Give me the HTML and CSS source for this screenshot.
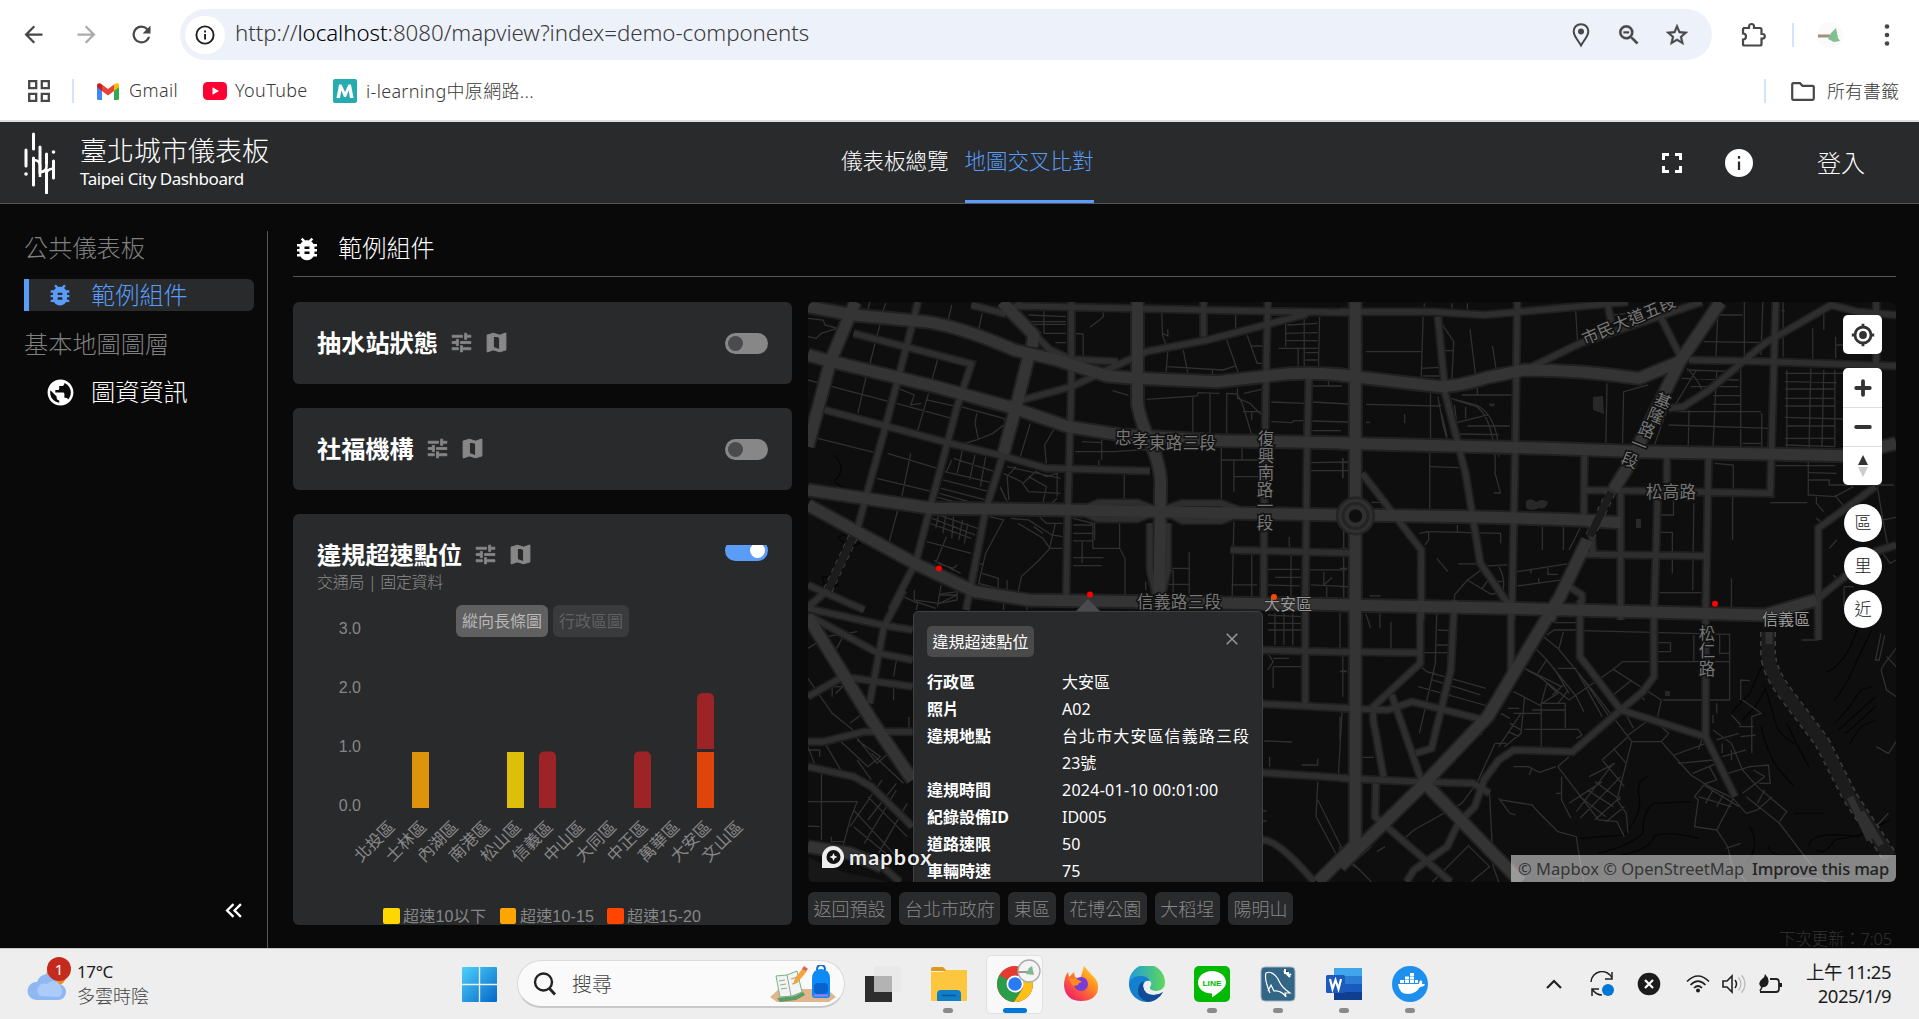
FILE: index.html
```html
<!DOCTYPE html>
<html lang="zh-Hant">
<head>
<meta charset="utf-8">
<title>臺北城市儀表板</title>
<link rel="stylesheet" href="styles.css">
</head>
<body>
<svg class="sprite" aria-hidden="true">
  <symbol id="bug" viewBox="0 0 24 24"><path d="M20 8h-2.81c-.45-.78-1.07-1.45-1.82-1.96L17 4.41 15.59 3l-2.17 2.17C12.96 5.06 12.49 5 12 5s-.96.06-1.41.17L8.41 3 7 4.41l1.62 1.63C7.88 6.55 7.26 7.22 6.81 8H4v2h2.09c-.05.33-.09.66-.09 1v1H4v2h2v1c0 .34.04.67.09 1H4v2h2.81c1.04 1.79 2.97 3 5.19 3s4.15-1.21 5.19-3H20v-2h-2.09c.05-.33.09-.66.09-1v-1h2v-2h-2v-1c0-.34-.04-.67-.09-1H20V8zm-6 8h-4v-2h4v2zm0-4h-4v-2h4v2z"/></symbol>
  <symbol id="globe" viewBox="0 0 24 24"><path d="M12 2C6.48 2 2 6.48 2 12s4.48 10 10 10 10-4.48 10-10S17.52 2 12 2zm-1 17.93c-3.95-.49-7-3.85-7-7.93 0-.62.08-1.21.21-1.79L9 15v1c0 1.1.9 2 2 2v1.93zm6.9-2.54c-.26-.81-1-1.39-1.9-1.39h-1v-3c0-.55-.45-1-1-1H8v-2h2c.55 0 1-.45 1-1V7h2c1.1 0 2-.9 2-2v-.41c2.93 1.19 5 4.06 5 7.41 0 2.08-.8 3.97-2.1 5.39z"/></symbol>
  <symbol id="tune" viewBox="0 0 24 24"><path d="M3 17v2h6v-2H3zM3 5v2h10V5H3zm10 16v-2h8v-2h-8v-2h-2v6h2zM7 9v2H3v2h4v2h2V9H7zm14 4v-2H11v2h10zm-6-4h2V7h4V5h-4V3h-2v6z" stroke="currentColor" stroke-width=".8" stroke-linejoin="round"/></symbol>
  <symbol id="map" viewBox="0 0 24 24"><path d="M20.5 3l-.16.03L15 5.1 9 3 3.36 4.9c-.21.07-.36.25-.36.48V20.5c0 .28.22.5.5.5l.16-.03L9 18.9l6 2.1 5.64-1.9c.21-.07.36-.25.36-.48V3.5c0-.28-.22-.5-.5-.5zM15 19l-6-2.11V5l6 2.11V19z" stroke="currentColor" stroke-width="1" stroke-linejoin="round"/></symbol>
  <symbol id="back" viewBox="0 0 24 24"><path d="M20 11H7.83l5.59-5.59L12 4l-8 8 8 8 1.41-1.41L7.83 13H20v-2z"/></symbol>
</svg>

<div class="browser">
  <div class="toolbar">
    <svg class="nav-back"><use href="#back"/></svg>
    <svg class="nav-fwd"><use href="#back"/></svg>
    <svg class="nav-reload" viewBox="0 0 24 24"><path d="M17.65 6.35A7.958 7.958 0 0 0 12 4a8 8 0 1 0 7.73 10h-2.08A6 6 0 1 1 12 6c1.66 0 3.14.69 4.22 1.78L13 11h7V4l-2.35 2.35z"/></svg>
    <div class="omnibox">
      <span class="site-info"><svg viewBox="0 0 20 20" width="20" height="20"><circle cx="10" cy="10" r="8.6" fill="none" stroke="#1f1f1f" stroke-width="1.9"/><path d="M9.1 9h1.9v5.4H9.1zM9.1 5.6h1.9v2H9.1z"/></svg></span>
      <span class="url">http://<b>localhost</b>:8080/mapview?index=demo-components</span>
      <svg class="ob-icon" viewBox="0 0 24 26"><path d="M12 2.2c-4.300 0-7.300 3.200-7.300 7.200 0 4.600 4 8.300 7.300 14.100 3.300-5.800 7.300-9.500 7.300-14.100 0-4-3-7.200-7.300-7.200z" fill="none" stroke="#474747" stroke-width="2"/><circle cx="12" cy="9.500" r="3"/></svg>
      <svg class="ob-icon" viewBox="0 0 24 24"><path d="M15.500 14h-.79l-.28-.27A6.471 6.471 0 0 0 16 9.500 6.500 6.500 0 1 0 9.500 16c1.610 0 3.090-.59 4.230-1.570l.27.28v.79l5 4.990L20.490 19l-4.990-5zm-6 0C7.010 14 5 11.990 5 9.500S7.010 5 9.500 5 14 7.010 14 9.500 11.990 14 9.500 14zM7 8.700h5v1.600H7z" stroke="currentColor" stroke-width=".4"/></svg>
      <svg class="ob-icon" viewBox="0 0 24 24"><path d="M22 9.240l-7.190-.62L12 2 9.190 8.630 2 9.240l5.460 4.730L5.820 21 12 17.270 18.180 21l-1.630-7.030L22 9.240zM12 15.400l-3.760 2.270 1-4.280-3.320-2.880 4.380-.38L12 6.100l1.710 4.040 4.380.38-3.320 2.880 1 4.280L12 15.400z" stroke="currentColor" stroke-width=".4"/></svg>
    </div>
    <svg class="puzzle" viewBox="0 0 28 28"><path d="M4 7h6V5.500a2.500 2.500 0 0 1 5 0V7h6q1.500 0 1.500 1.500V13h1a2.300 2.300 0 0 1 0 4.600h-1V23q0 1.500-1.500 1.500H5.500Q4 24.500 4 23v-4.500a3 3 0 0 0 0-6V8.500Q4 7 5.500 7" fill="none" stroke="#474747" stroke-width="2.200"/></svg>
    <i class="sep sep-ext"></i>
    <svg class="profile" viewBox="0 0 28 28"><circle cx="14" cy="14" r="13" fill="#fafafa"/><path d="M2 13.500h12v2.500H2z" fill="#b58a6a"/><path d="M2 15h12v1.500H2z" fill="#8a9a88"/><path d="M12 18l3-6 5-5 2 10 2 3-6 1z" fill="#7fbf93"/></svg>
    <svg class="dots" viewBox="0 0 6 24"><circle cx="3" cy="3.500" r="2.300"/><circle cx="3" cy="12" r="2.300"/><circle cx="3" cy="20.500" r="2.300"/></svg>
  </div>
  <div class="bookmarks">
    <svg class="apps" viewBox="0 0 22 22"><path d="M1.200 1.200h7v7h-7zM13.800 1.200h7v7h-7zM1.200 13.800h7v7h-7zM13.800 13.800h7v7h-7z" fill="none" stroke="#474747" stroke-width="2.300"/></svg>
    <i class="sep sep-apps"></i>
    <svg class="bm-gmail" viewBox="0 0 22 17"><path d="M0 2v13.500Q0 17 1.500 17H5V7z" fill="#4285f4"/><path d="M22 2v13.500q0 1.500-1.500 1.500H17V7z" fill="#34a853"/><path d="M17 1.500l2-1.200Q22-.5 22 2.500V4l-5 4z" fill="#fbbc04"/><path d="M5 8V1.500l6 4.500 6-4.500V8l-6 4.500z" fill="#ea4335"/><path d="M5 8L0 4V2.500Q0-.5 3 .3l2 1.200z" fill="#c5221f"/></svg>
    <span class="t-gmail">Gmail</span>
    <svg class="bm-yt" viewBox="0 0 24 18"><rect width="24" height="18" rx="4.500" fill="#f03"/><path d="M9.500 5.300v7.400L16 9z" fill="#fff"/></svg>
    <span class="t-yt">YouTube</span>
    <svg class="bm-m" viewBox="0 0 24 24"><rect width="24" height="24" rx="2" fill="#26abb0"/><path d="M3.500 19L6 5.500h2.500L12 13l3.500-7.500H18L20.500 19H17l-1.300-7.500L13 18h-2l-2.700-6.500L7 19z" fill="#fff"/></svg>
    <span class="t-learn">i-learning中原網路...</span>
    <i class="sep sep-all"></i>
    <svg class="folder" viewBox="0 0 24 19"><path d="M1.200 2.500q0-1.300 1.300-1.300H9l2.500 2.600h10q1.300 0 1.300 1.300v11.400q0 1.300-1.300 1.300h-19q-1.300 0-1.300-1.300z" fill="none" stroke="#474747" stroke-width="2.200"/></svg>
    <span>所有書籤</span>
  </div>
</div>

<header class="app-header">
  <svg class="logo" viewBox="0 0 32 62"><path d="M2 18v16M9.500 2v15M9.500 26v27M16 15v26M22.500 38v23M22.500 22v9M29.500 29v17" fill="none" stroke="#fff" stroke-width="3" stroke-linecap="round"/><path d="M9.500 28q6 0 6.500 5v12M16 40q6 0 6.500-5v-9M22.500 42q0-5 7-5.500" fill="none" stroke="#fff" stroke-width="2.600"/><circle cx="2" cy="42" r="1.800" fill="#fff"/><circle cx="29.500" cy="20" r="1.800" fill="#fff"/></svg>
  <div class="brand"><h1>臺北城市儀表板</h1><h2>Taipei City Dashboard</h2></div>
  <nav><a>儀表板總覽</a><a class="on">地圖交叉比對</a></nav>
  <svg class="h-full" viewBox="0 0 20 20"><path d="M1.500 7V1.500H7M13 1.500h5.500V7M18.500 13v5.500H13M7 18.500H1.500V13" fill="none" stroke="#fff" stroke-width="3"/></svg>
  <svg class="h-info" viewBox="2 2 20 20"><path d="M12 2a10 10 0 1 0 0 20 10 10 0 0 0 0-20zm.8 15h-1.600v-6h1.600v6zm0-8h-1.600V7h1.600v2z"/></svg>
  <span class="login">登入</span>
</header>

<div class="app">
  <aside>
    <div class="side-list">
      <h3>公共儀表板</h3>
      <div class="item active"><svg><use href="#bug"/></svg>範例組件</div>
      <h3>基本地圖圖層</h3>
      <div class="item"><svg><use href="#globe"/></svg>圖資資訊</div>
    </div>
    <svg class="collapse" viewBox="0 0 16 14"><path d="M8 1L2 7l6 6M15 1L9 7l6 6" fill="none" stroke="#fff" stroke-width="2.200"/></svg>
  </aside>
  <main>
    <div class="title"><svg><use href="#bug"/></svg>範例組件</div>
    <div class="content">
      <div class="cards">
        <section class="card"><div class="card-head"><h4>抽水站狀態</h4><svg><use href="#tune"/></svg><svg><use href="#map"/></svg><span class="toggle"></span></div></section>
        <section class="card"><div class="card-head"><h4>社福機構</h4><svg><use href="#tune"/></svg><svg><use href="#map"/></svg><span class="toggle"></span></div></section>
        <section class="card tall">
          <div class="card-head"><h4>違規超速點位</h4><svg><use href="#tune"/></svg><svg><use href="#map"/></svg><span class="toggle-clip"><span class="toggle on"></span></span></div>
          <p>交通局 | 固定資料</p>
          <div class="tabs"><span class="on">縱向長條圖</span><span>行政區圖</span></div>
          <svg class="chart" viewBox="0 0 499 288">
            <g class="ylab"><text x="68" y="-3">3.0</text><text x="68" y="56">2.0</text><text x="68" y="115">1.0</text><text x="68" y="174">0.0</text></g>
            <path d="M119 115h17v56h-17z" fill="#dd930c"/>
            <path d="M214 115h17v56h-17z" fill="#ddbe0a"/>
            <path d="M246 171v-51q0-5.500 5.500-5.500h6q5.500 0 5.500 5.500v51z" fill="#9c2426"/>
            <path d="M341 171v-51q0-5.500 5.500-5.500h6q5.500 0 5.500 5.500v51z" fill="#9c2426"/>
            <path d="M404 115h17v56h-17z" fill="#df440b"/>
            <path d="M404 112v-50q0-6 5.500-6h6q5.500 0 5.500 6v50z" fill="#9c2426"/>
            <g class="xlab">
              <text transform="translate(103 191) rotate(-45)">北投區</text><text transform="translate(134.600 191) rotate(-45)">士林區</text><text transform="translate(166.200 191) rotate(-45)">內湖區</text><text transform="translate(197.800 191) rotate(-45)">南港區</text><text transform="translate(229.400 191) rotate(-45)">松山區</text><text transform="translate(261 191) rotate(-45)">信義區</text><text transform="translate(292.700 191) rotate(-45)">中山區</text><text transform="translate(324.300 191) rotate(-45)">大同區</text><text transform="translate(356 191) rotate(-45)">中正區</text><text transform="translate(387.600 191) rotate(-45)">萬華區</text><text transform="translate(419.200 191) rotate(-45)">大安區</text><text transform="translate(450.800 191) rotate(-45)">文山區</text>
            </g>
            <g class="legend"><rect x="90" y="271" width="17" height="16" rx="2" fill="#ffd700"/><text x="110" y="285" textLength="83">超速10以下</text><rect x="207" y="271" width="16" height="16" rx="2" fill="#ffa500"/><text x="227" y="285" textLength="74">超速10-15</text><rect x="314" y="271" width="17" height="16" rx="2" fill="#ff4500"/><text x="334" y="285" textLength="74">超速15-20</text></g>
          </svg>
        </section>
      </div>
      <div class="map-col">
        <div class="map">
          <svg class="tiles" viewBox="0 0 1088 580">
            <defs>
              <g id="mid-roads">
                <g transform="translate(-8 -12) scale(.3571 .3333)">
                  <path d="M570 490L520 660L480 880L465 960M330 36L320 80L240 408L190 600L160 720M150 130L480 222L440 350L365 650L325 815L255 960M70 360L240 408L420 460L570 498L690 535L980 543M760 36V290L750 660L745 930M480 45L570 70L620 40M610 48L1130 60L1568 68M1130 36V140M1310 36L1305 250L1300 640L1298 960M570 345L760 290L900 220L970 185L1140 150L1420 72M655 130L700 180L760 208L890 215M1425 265L1420 460L1415 960M1205 780L1568 790M22 885L180 960M22 950L80 900"/>
                  <path d="M800 655L835 638H945L1000 662L945 687H835L780 662M1010 662L1070 640H1180L1240 665L1180 692H1070L1020 662M980 700V840L1000 930M1030 700V840L1010 930"/>
                </g>
                <g transform="translate(532 -12) scale(.3693 .3333)">
                  <path d="M0 65H250L390 75L720 42L780 36M265 80L285 310L340 550L380 820L460 950M480 36L475 450L465 990M60 550L220 780V990M520 230L650 160L980 36M870 85L920 195M725 45L735 100M945 210L1100 213L1506 228M890 355L930 350L1000 300L1150 160L1330 45L1400 65L1506 75M1180 36L1165 610L665 600M1452 36V220M885 490V580M662 490L660 690M998 495L990 990M860 620L850 990M760 600V990M680 700L685 790M665 793L990 798M1450 590L1295 715V990M620 890L655 915V960M1290 930L1450 785L1506 765"/>
                </g>
                <g transform="translate(-8 288) scale(.3571 .3333)">
                  <path d="M22 55L230 105L315 120M290 0L235 110L195 340M22 75L220 190L315 210M22 320L120 260L315 290M22 455H65L180 425H315M22 530L150 560L200 590L315 710M22 55L75 0M230 830L280 876M1296 750Q1340 750 1440 876M1296 180L1535 187M1296 342L1535 355M1296 548L1535 565M1415 0V340"/>
                </g>
                <g transform="translate(532 298) scale(.3693 .3333)">
                  <path d="M0 535L210 545L360 550L405 580M217 0V190L90 320V360L118 530M0 155L217 158M0 325L130 330L195 305L390 360M140 285L220 540M310 0L300 210L248 445L205 460M463 0V220M650 0V170L760 330L990 410L1070 590M850 0V230L820 275L760 330L630 455L470 450L430 480L390 540L365 620L320 670L290 740L200 810L180 846M990 0V410M97 550L95 650L300 846M1295 0V120"/>
                </g>
              </g>
              <g id="main-roads">
                <g transform="translate(-8 -12) scale(.3571 .3333)">
                  <path d="M22 195L90 215L380 290L600 355L750 410L900 435L1180 452L1568 460M22 600L180 625L370 655L750 660L1000 665L1510 675M22 645L330 825L490 905L640 930L1568 945M155 36L85 215L22 470M565 36L655 135L650 170M640 200L610 330L570 490M945 36V340Q950 380 970 430Q1010 520 1010 580L1005 940M1555 36V625M1555 730V990"/>
                  <path d="M22 50L150 75L350 95Q450 110 600 180L720 210L860 258L940 265L1170 275L1310 258Q1430 240 1568 262"/>
                </g>
                <g transform="translate(532 -12) scale(.3693 .3333)">
                  <path d="M0 255L270 290Q320 290 400 262L500 240Q650 240 810 265L920 215L1030 36M0 460L560 475L820 485L1370 497L1506 460M90 676L350 680L650 690L760 698M920 215L780 530L740 600M670 750L565 990M0 945L460 955L1150 975L1290 930"/>
                </g>
                <g transform="translate(-8 288) scale(.3571 .3333)"><path d="M22 80L200 390L315 570M22 770L140 790L230 830M1450 876L1568 750M1555 0V760"/></g>
                <g transform="translate(532 298) scale(.3693 .3333)"><path d="M0 800L220 560L400 350L470 220L590 0M230 550L490 846"/></g>
              </g>
            </defs>
            <rect width="1088" height="580" fill="#0e0e0e"/>
            <g class="contour" transform="translate(532 298) scale(.3693 .3333)">
              <path d="M1320 215Q1370 190 1400 90M1340 300Q1380 240 1400 180L1440 90M1340 370L1380 320L1410 270L1440 260M1350 390L1400 340L1450 290M1370 400L1450 320M1380 430L1410 380L1450 360M1150 260Q1170 330 1180 370T1230 430M1210 370L1240 440L1270 500M1140 380Q1160 470 1190 510L1230 560M650 715L770 705Q820 640 810 590Q800 540 835 530M700 760Q780 740 820 700Q820 630 850 610L950 605M760 765Q840 750 850 710Q880 690 970 715M1100 790Q1140 740 1110 680M1160 740Q1170 780 1250 760M1270 740Q1270 690 1400 710L1490 660M1290 750Q1310 770 1340 720L1430 700M1230 640H1310"/>
              <path d="M1060 340Q1090 300 1110 280L1150 180M1090 360Q1130 320 1150 270"/>
            </g>
            <path class="contour" d="M26 153q14 14 0 26M26 180q9 4 8 9M30 235l12-4 10 10-12 5zM14 275l12 0 4 8-12 4z"/>
            <path d="M1 555Q28 570 50 573L80 580H0z" fill="#171717"/>
            <g class="minor">
              <g transform="translate(-8 -12) scale(.3571 .3333)">
                <path d="M22 85L65 90L70 105L105 115L60 130L45 145L22 140M195 36L190 60M240 40L232 65M425 45L415 90M510 70L500 120M225 100L215 140M210 160L195 225M385 210L368 275M90 290L250 335M185 260L162 370M22 270L50 278M275 295L320 315L310 345L340 340M270 340L425 385M360 310L330 420M355 330L440 350M450 350L570 385L577 400L540 430L495 450L460 460M495 370L490 400L500 450M645 400L617 500M710 420L685 465L690 520M50 445L210 488M245 490L385 535M310 490L285 620M215 565L370 605M275 655L250 755M630 95H745M640 75L745 80M683 60V130M655 103H745M683 130H745M715 158H745M770 130L793 132V200M848 65L850 80L812 112M1013 70L1015 135L1030 180L1025 245M1030 118V138L1015 130M1073 180L1087 255M1028 230L1185 240L1220 228M1195 150L1228 250M1155 240V258M1252 135L1280 220H1295M1262 168H1300M1220 75V115M1340 175H1450M1455 80L1452 230M1360 100V170M1412 85V230M1395 175V230M1365 105L1450 100M1360 130L1450 128M1360 152H1450M1415 188H1450M1415 210H1450M875 302L920 316M970 328L1112 318L1115 308L1175 310M1100 320V430M1148 310V430M1195 435V310L1225 312L1240 345L1265 435M1225 295V325L1260 340L1290 372M1240 365H1290M1265 365V390M1243 310L1293 298M1320 336L1415 340M1435 336L1535 342M1320 395L1378 398L1382 392H1415M1435 393L1535 396M1435 422H1515M1435 288H1518M1480 270V288M770 485H875L980 478M845 450V510M790 455L845 458M837 510V530M908 550V630M1180 470V635M1238 470V510M1180 510H1285M1215 510V605M1215 560H1285M1430 518L1535 516M1430 542H1535M1520 505V565"/>
                <path d="M430 505L545 545M425 510L410 545M455 480L440 550M490 495L475 570M520 500L505 590M405 545L545 580M400 570L530 605M395 595L520 630M390 610L490 640M385 622L450 640M580 530L730 565M570 550L620 575L640 605L730 610M605 530L580 560L585 630M625 580L660 545L690 560L720 550V620M560 590L580 635M640 560L690 590L680 640M720 625L705 640M375 670L510 720M370 685L490 735M365 700L480 745M390 665L380 715M410 665L400 730M430 680L425 745M455 690L445 750M470 700L460 760M355 755L480 790M410 740L380 820M375 810L450 850M440 825L425 840M385 820L430 835M530 680L570 690L520 790L500 880M590 685L640 690L705 735L735 740M610 700L680 745L700 775L670 810L620 860L610 910M670 680L690 700H735M700 775H735M655 710L680 730M715 700L700 770M500 820L515 825M510 850L555 865V895L500 880M580 870V900M765 685L820 700V775H895L910 805V920M765 705H820M765 730H820M765 753H820M790 755V820M765 803H850M765 827H845M895 695V775M825 690V750M1215 695L1210 930M1265 795V930M1090 785V930M1030 835H1090M1045 840V910M1025 883H1090M968 875V900M1310 838H1400M1330 862H1405M1310 885L1400 888M1370 740V775M1375 790V930M1425 840H1530M1430 885L1535 890M1467 845V885L1490 862M1475 890V930M1522 700V930M1210 885H1280M395 885L385 950M395 912L440 905V930L390 940M290 920L330 940M325 935L380 955M570 935V960M635 940V960"/>
              </g>
              <g transform="translate(532 -12) scale(.3693 .3333)">
                <path d="M228 40V50M303 40V55M345 40V60M70 185H220M225 80L220 265M220 235L270 232M225 258H270M275 80L278 105L308 155L303 265L310 270M285 182H305M352 118L367 255M413 168L423 240M638 60L643 150M780 70L740 75M70 343L265 348L275 345M245 310V450M70 397H82M175 372V400M330 315H465M372 280V315M300 325L370 345Q430 380 430 500M310 330L370 350Q410 380 420 500M315 398L400 375M345 408H460M320 432L430 434M265 320L280 410L290 448M275 370L290 440M420 500V550L435 610M310 345L315 390M340 350V385M723 280L720 460M835 285L768 305L765 460M1020 75H1090M1023 70L1018 200M1095 36V200M985 155L1160 158M1145 36L1140 195M1200 36V200M1195 62H1205M1280 115V205M1310 70V120M1342 140V205M1345 165H1362M940 240L1080 245M925 265L1080 270M950 290H1080M965 240L910 340M940 235Q970 270 980 300M1020 245L1010 470M1085 235V470M890 405L1165 415M910 365H1140M945 360L943 470M1142 370V470M1090 460H1140M885 360L850 470M1010 317H1085M1010 343H1085M1205 250H1362M1205 275L1345 278M1205 297H1340M1205 325H1340M1205 348H1340M1205 382L1362 387M1210 408H1340M1205 445H1340M1205 465L1340 470M1210 240V470M1275 235L1270 475M1340 240V470M1310 240L1305 470M243 485V660M245 530L322 533M8 505V565M0 518H22M85 637H125M215 730L240 725V750L230 765M243 725L435 730V760M318 705V725M548 710V780M605 712V780M650 715L620 780M0 775H20M10 710V930M0 835H20M0 890H20M80 918H110M262 805L292 845M320 822H370M395 828L453 825M430 830Q450 870 440 910L408 912L345 870L395 830M345 870L310 915V940M385 895L400 872L440 875M480 845L615 822M480 888L600 870M517 840V850M563 830V853H590M538 865V880M903 630V675H865M958 640L955 900M860 727H900V850M865 908H980M1063 620V750M1060 865V960M1165 638H1265M1015 520L1065 525V600M1175 527H1340M1268 515V615L1340 620L1390 590M1270 570H1325V585H1500M1270 548L1345 550M1290 620V640L1310 665M1340 615L1365 650M1455 590L1470 690L1506 682M1470 690L1482 760M1290 685L1305 700M1325 775L1345 750M1335 855L1350 870M1365 890H1390M1365 890V950M1470 790L1490 820L1506 810"/>
              </g>
              <g transform="translate(-8 288) scale(.3571 .3333)">
                <path d="M22 175L75 140L160 125M75 145L100 180L125 130M22 265L90 370L160 430M200 350L140 400M90 290V320M90 290L120 290L100 310M270 210L262 260M262 290V330M305 380V415M22 480H55V500M22 470L40 520M60 530V750M70 460L125 560M110 450L190 530L225 500L160 450M150 430L215 520L270 470M200 490L290 580M160 510L200 570M230 570L140 710M270 600L180 760M300 640L220 790M150 660L270 800M190 620L300 740M150 710L240 790M22 635H160L140 690L120 770M22 708L55 710M88 740V755H125M270 580L190 690M320 0V30L390 40L440 15M390 15H440M330 40L325 60M1310 75L1405 80M1310 100H1405M1310 120H1405M1330 70V165M1355 70V165M1380 70V165M1310 190L1325 215L1310 240M1325 205H1370M1325 230H1405M1325 230V295M1300 453L1378 456M1315 500V530M1405 525H1450V505M1450 575L1445 680L1500 790M1450 630L1520 780M1518 365L1508 550M1520 190V320M1515 243H1530M1550 790L1540 820L1568 840M1296 663H1306M1296 693H1306"/>
              </g>
              <g transform="translate(532 298) scale(.3693 .3333)">
                <path d="M0 40V150M70 42L83 85M108 40V85M138 65V145M0 215H18M60 472H92M0 350V420M262 40L258 190L215 400M265 90L298 92M262 135H298M220 158H298M220 200L235 215L395 265M250 240L380 285M212 260L400 318L410 325M275 290L300 285M580 68H640M560 105L580 90H645M605 95L593 145M655 92L1055 103V300L875 300M860 128H895V155H860M958 105V185M1028 105V160H1055M765 185H1055M765 185L740 208L870 300L860 350M790 240L740 285M620 300L740 208M825 300L815 290M545 105L590 145L680 265L780 410L790 425L775 490L750 600L775 640L780 700M525 140L560 180L640 290L660 335M505 210L540 230L620 300M500 205L600 260M590 205H640M580 205L620 280M545 310H610V385M545 315V440M520 330H610M470 340H545M455 325H485M500 290L490 400L445 440M470 275L540 315L590 280L560 250L545 310M615 275L590 310M605 255L575 285M435 340L460 355M450 430L420 430L370 550L330 610L200 690L175 715M490 340L430 440M460 370L490 390M455 395L485 410M500 388H645L655 405L640 415M560 180L535 220M525 80L500 130L485 190M640 210L710 350M660 240L735 360M775 345L795 385M830 365L780 405M790 425H870L890 400L870 380M870 425L950 525L1000 560L1065 595L1020 690L960 680L970 600L960 590L985 555M990 430L905 465M980 420L970 450M1010 480L915 490M1020 490L955 520M1000 500L1020 540L990 550M1090 300L1140 340L1115 350V460M1080 380H1120M1060 345L1085 375M1085 410L1125 405M1010 345V370M1020 310V340M1010 390L1060 430L1090 510L1130 560L1210 635L1190 665M1020 420L1080 400M1035 470L1100 450M1050 520L1110 500L1160 495L1165 550H1135M1120 510L1150 530M1090 580L1150 530M1100 590L1190 670L1300 830M1060 590L1100 640L1130 630L1170 590M1130 610L1150 570M1045 745L1085 730M1020 690L1050 740L1060 790L1100 846M985 555L1080 620M970 590L1060 620M1010 570L990 610M1040 580L1020 620M1060 450V480M1035 430V460M590 500L620 470M590 500L700 660L750 665L770 710M470 500L510 500L540 517L585 500M520 505L512 525M600 530V600L625 655M585 580H600M620 610L710 545M640 635L740 490M650 655L760 530M690 660L760 590M720 665L770 620M710 480L780 410M675 530L745 490M690 545L760 600M670 570L740 620M650 590L720 650M710 480L770 560M740 445L775 490M405 580L415 800L430 846M430 595L460 640L475 645M435 600L520 615L540 640L590 695L640 710L645 750L660 846M375 400L385 405M250 846L350 735M350 740L405 800L355 846M85 740L35 790L85 846M100 755L122 740M0 740V760M0 760L12 780M1085 300L1085 240L1110 242M1220 835L1290 835L1320 846M1250 120H1295M1465 100L1450 180H1460L1475 105M1480 170L1506 200M1465 210L1480 270L1506 290M1506 145L1475 190L1465 210M1452 440L1485 460L1506 425M1455 675L1485 640M570 828H600"/>
              </g>
            </g>
            <use href="#mid-roads" class="case-mid"/><use href="#main-roads" class="case-main"/>
            <use href="#mid-roads" class="fill-mid"/><use href="#main-roads" class="fill-main"/>
            <g fill="none"><circle cx="547.500" cy="214" r="6" fill="#0e0e0e"/><circle cx="547.500" cy="214" r="13" stroke="#242424" stroke-width="13"/><circle cx="547.500" cy="214" r="15.500" stroke="#303030" stroke-width="3"/><circle cx="547.500" cy="214" r="9" stroke="#303030" stroke-width="4"/></g>
            <path class="tunnel-edge" d="M960 330V350Q960 368 978 392L1014 440L1042 495L1082 555"/><path class="tunnel" d="M960 330V350Q960 368 978 392L1014 440L1042 495L1082 555"/>
            <path class="tunnel-end" d="M961 330V342M1042 495L1062 538M1053 510L1073 543"/>
            <path class="tunnel-edge thin" d="M803 190L782 234M45 235L20 288"/><path class="tunnel thin" d="M803 190L782 234M45 235L20 288"/>
            <path d="M785 95l10-1 1 18-11-4zM718 199q6-4 10 1q6-4 12 0q-2 8-9 6q-8 4-13 0zM828 217h5v9h-5zM857 389h5v5h-5zM686 190h6v2h-6zM682 101a3 2 0 1 0 5 1z" fill="#282828"/>
            <g class="label">
              <g><text x="307" y="142">忠</text><text x="324" y="145">孝</text><text x="341" y="147" textLength="67">東路三段</text></g>
              <text x="329" y="306" textLength="84">信義路三段</text><text class="area" x="456" y="308">大安區</text>
              <g text-anchor="middle"><text x="458" y="143">復</text><text x="458" y="160">興</text><text x="458" y="177">南</text><text x="457" y="194">路</text><text x="457" y="210">一</text><text x="457" y="227">段</text>
              <text transform="translate(855 99) rotate(22)" y="6">基</text><text transform="translate(848 113.500) rotate(22)" y="6">隆</text><text transform="translate(839 128) rotate(22)" y="6">路</text><text transform="translate(831 143) rotate(22)" y="6">一</text><text transform="translate(822 158) rotate(22)" y="6">段</text>
              <text x="899" y="338">松</text><text x="899" y="355">仁</text><text x="899" y="373">路</text></g>
              <text transform="translate(777 43) rotate(-23)" textLength="100">市民大道五段</text>
              <text x="838" y="196" textLength="50">松高路</text><text class="area" x="954" y="323">信義區</text>
            </g>
            <g fill="red"><circle cx="131" cy="266.500" r="3"/><circle cx="282" cy="292.500" r="3"/><circle cx="907" cy="301.800" r="3"/></g><circle cx="466" cy="295" r="3" fill="#ff4500"/>
          </svg>
          <div class="popup">
            <div class="pop-head"><span>違規超速點位</span><svg viewBox="0 0 12 12"><path d="M.7.7l10.600 10.600M11.300.7L.7 11.300" stroke="#999" stroke-width="1.500"/></svg></div>
            <dl><dt>行政區</dt><dd>大安區</dd><dt>照片</dt><dd>A02</dd><dt>違規地點</dt><dd>台北市大安區信義路三段23號</dd><dt>違規時間</dt><dd>2024-01-10 00:01:00</dd><dt>紀錄設備ID</dt><dd>ID005</dd><dt>道路速限</dt><dd>50</dd><dt>車輛時速</dt><dd>75</dd></dl>
          </div>
          <div class="mapbox"><svg viewBox="0 0 22 22"><path d="M0 22V11A11 11 0 1 1 11 22z" fill="#eee"/><circle cx="11.500" cy="11" r="7" fill="#111"/><path d="M11.500 7l1.200 2.800 2.800 1.200-2.800 1.200-1.200 2.800-1.200-2.800L7.500 11l2.800-1.200z" fill="#eee"/></svg>mapbox</div>
          <div class="controls">
            <div class="ctl"><svg viewBox="0 0 24 24"><circle cx="12" cy="12" r="8" fill="none" stroke="#333" stroke-width="2.800"/><circle cx="12" cy="12" r="3.900" fill="#333"/><path d="M12 .8V4M12 20v3.200M.8 12H4M20 12h3.200" stroke="#333" stroke-width="2.800"/></svg></div>
            <div class="ctl group"><span><svg viewBox="0 0 16 16"><path d="M8 2v12M2 8h12" stroke="#333" stroke-width="3.400" stroke-linecap="round"/></svg></span><span><svg viewBox="0 0 16 16"><path d="M2 8h12" stroke="#333" stroke-width="3.600" stroke-linecap="round"/></svg></span><span><svg class="north" viewBox="0 0 12 24"><path d="M1 11L6 1l5 10z" fill="#333"/><path d="M1 13l5 10 5-10z" fill="#ccc"/></svg></span></div>
            <b>區</b><b>里</b><b>近</b>
          </div>
          <div class="attrib"><span>© Mapbox © OpenStreetMap</span><strong>Improve this map</strong></div>
        </div>
        <div class="chips"><span>返回預設</span><span>台北市政府</span><span>東區</span><span>花博公園</span><span>大稻埕</span><span>陽明山</span></div>
      </div>
    </div>
    <div class="next">下次更新：7:05</div>
  </main>
</div>

<footer class="taskbar">
  <svg class="weather" viewBox="0 0 44 50"><circle cx="29" cy="22" r="10" fill="#f58a1f"/><path d="M9 46a9 9 0 0 1 1-18 11 11 0 0 1 18-5 8 8 0 0 1 3 7 8 8 0 0 1 0 16z" fill="#8fb7f2"/><path d="M13 42a7 7 0 0 1 7-12 8 8 0 0 1 14 4 6 6 0 0 1-2 9z" fill="#adcbf8"/><circle cx="32" cy="15" r="12" fill="#c42b1c"/><text x="32" y="20.500" text-anchor="middle" fill="#fff">1</text></svg>
  <div class="wx-text"><span>17°C</span><em>多雲時陰</em></div>
  <svg class="win" viewBox="0 0 35 35"><defs><linearGradient id="wg" x2="1" y2="1"><stop stop-color="#4dd0fb"/><stop offset="1" stop-color="#0567c8"/></linearGradient></defs><path d="M0 1q0-1 1-1h15.800v16.800H0zM18.200 0H34q1 0 1 1v15.800H18.200zM0 18.200h16.800V35H1q-1 0-1-1zM18.200 18.200H35V34q0 1-1 1H18.200z" fill="url(#wg)"/></svg>
  <div class="search">
    <svg class="mag" viewBox="0 0 24 24"><circle cx="10.500" cy="10" r="8.500" fill="none" stroke="#222" stroke-width="2.400"/><path d="M16.500 16.500l5.500 6" stroke="#222" stroke-width="2.800"/></svg><span>搜尋</span>
    <svg class="study" viewBox="0 0 66 38"><path d="M0 32l9-8h48l9 8-7 5H7z" fill="#e0b68c"/><path d="M7 33l18-2 8-4 2 3-9 5-16 2z" fill="#5a9c68"/><path d="M6 11l11-1 10-4 5 21-10 4-12 1z" fill="#f1f5f1" stroke="#7bb088" stroke-width="1"/><path d="M17 10l4 21M9 16l6-1M10 20l6-1M11 24l6-1M21 14l6-2M22 19l6-2" stroke="#9aa5a0"/><path d="M23 20l2-7 8-10 4 3-9 11z" fill="#f5a43a"/><path d="M32 4l2-3 4 3-2 2z" fill="#e65b5b"/><path d="M42 14q0-10 9-10t9 10v16q0 3-3 3H45q-3 0-3-3z" fill="#0d8bf5"/><path d="M47 5q0-5 4-5t4 5" fill="none" stroke="#0d6ad0" stroke-width="2"/><rect x="44" y="18" width="14" height="11" rx="4" fill="#0863cf"/><path d="M44 30.500h14" stroke="#a77bf0" stroke-width="2"/></svg>
  </div>
  <div class="tasks">
    <span><svg viewBox="0 0 36 36"><path d="M0 10h27v26H0z" fill="#2d2d2d"/><path d="M9 0h27v26H9z" fill="#e8e8e8" opacity=".88"/><path d="M9 10h18v16H9z" fill="#b3b3b3"/></svg></span>
    <span class="run"><svg viewBox="0 0 36 36"><path d="M0 3q0-2 2-2h10l4 4H0z" fill="#dd9a12"/><path d="M0 6h12l3-2h21v30q0 1-1 1H1q-1 0-1-1z" fill="#fcc73e"/><path d="M6 35V28q0-4 4-4h16q4 0 4 4v7z" fill="#0f7fca"/><path d="M11 29.500h14" stroke="#075a9a" stroke-width="1.600"/></svg></span>
    <span class="run current"><svg viewBox="0 0 36 36"><circle cx="18" cy="18" r="18" fill="#e53a2f"/><path d="M18 18L2.500 9A18 18 0 0 0 17 36l8-13z" fill="#2a9c4a"/><path d="M18 10h16a18 18 0 0 1-17 26l9-14z" fill="#fbc116"/><circle cx="18" cy="18" r="8.500" fill="#fff"/><circle cx="18" cy="18" r="6.800" fill="#2a7af3"/></svg><svg class="mini" viewBox="0 0 24 24"><circle cx="12" cy="12" r="11" fill="#f4f4f4" stroke="#aaa" stroke-width="1.300"/><path d="M1 12h10v2H1z" fill="#999"/><path d="M9 15l3-6 3-2 2 9z" fill="#80b894"/></svg></span>
    <span><svg viewBox="0 0 36 36"><defs><linearGradient id="fx" x1="1" x2=".2" y2="1"><stop stop-color="#ffe83b"/><stop offset=".45" stop-color="#ff8a1e"/><stop offset="1" stop-color="#f0186c"/></linearGradient></defs><path d="M21 0q3 4 8 9 7 6 6 14-2 12-17 12T1 20Q1 11 5 6l1 5 5-5 1 5 5 2 2-6z" fill="url(#fx)"/><circle cx="18" cy="18" r="7" fill="#7a3cd8"/><path d="M5 12l9 1 5 3q-4 1-4 3l-5 1z" fill="#ff8a1e"/></svg></span>
    <span><svg viewBox="0 0 36 36"><defs><linearGradient id="eg"><stop stop-color="#1e9be0"/><stop offset="1" stop-color="#60d858"/></linearGradient></defs><path d="M0 17A18 18 0 0 1 36 16q0 8-8 9-8 0-7-4 3-4-1-7-7-4-14 1z" fill="url(#eg)"/><path d="M0 17q3-7 11-7 8 0 10 5-6-1-7 5 1 9 11 9 5 0 9-3-6 10-17 10A18 18 0 0 1 0 17z" fill="#1580d0"/><path d="M14 20q1 9 11 9 5 0 9-3-5 9-15 10-11-3-10-13 1-6 6-8-1 1-1 5z" fill="#114a96"/></svg></span>
    <span class="run"><svg viewBox="0 0 36 36"><rect width="36" height="36" rx="5" fill="#00b900"/><path d="M18 5c8 0 14 5 14 11.500 0 5-6 9.500-14 15v-4C10 27.500 4 23 4 16.500S10 5 18 5z" fill="#fff"/><text class="line-t" x="18" y="20" text-anchor="middle" textLength="19" lengthAdjust="spacingAndGlyphs">LINE</text></svg></span>
    <span class="run"><svg viewBox="0 0 36 36"><rect x="1" y="1" width="34" height="34" rx="4" fill="#336587" stroke="#9db3c2"/><path d="M10 27Q4 13 6 7q6-3 12 6 3 7 8 11l4 3-5 0 1 4q-5-7-12-6l-3-6-3 6" fill="none" stroke="#fff" stroke-width="1.200"/><path d="M24 5l6 6M25 3v4h4M28 10l3-2" stroke="#fff" stroke-width="2"/></svg></span>
    <span class="run"><svg viewBox="0 0 36 36"><path d="M8 2h28v8H8z" fill="#41a5ee"/><path d="M8 10h28v8H8z" fill="#2b7cd3"/><path d="M8 18h28v8H8z" fill="#185abd"/><path d="M8 26h28v8H8z" fill="#103f91"/><rect y="9" width="19" height="18" rx="1.500" fill="#1b5abf"/><path d="M4 13l2.500 10L9.500 14l3 9L15 13" fill="none" stroke="#fff" stroke-width="2.200"/></svg></span>
    <span class="run"><svg viewBox="0 0 36 36"><circle cx="18" cy="18" r="18" fill="#1d8fee"/><path d="M6 18h21q0-3 2-4 2 2 1 4l3 0q-1 3-5 3-4 7-12 7-9 0-10-10zM8 14h4v3H8zM13 14h4v3h-4zM18 14h4v3h-4zM23 14h3v3h-3zM13 10.500h4v3h-4zM18 10.500h4v3h-4zM18 7h4v3h-4z" fill="#fff"/></svg></span>
  </div>
  <div class="tray">
    <svg width="16" height="10" viewBox="0 0 16 10"><path d="M1 9l7-7 7 7" fill="none" stroke="#222" stroke-width="2.200"/></svg>
    <svg class="sync" width="26" height="26" viewBox="0 0 26 26"><path d="M2 11A11 11 0 0 1 23 7M23 1v7h-7M3 25v-7h7M3 18q4 6 10 6" fill="none" stroke="#222" stroke-width="1.500"/><circle cx="19" cy="19" r="6" fill="#0078d7"/></svg>
    <svg class="xc" width="24" height="24" viewBox="0 0 24 24"><circle cx="12" cy="12" r="11.300" fill="#1c1c1c"/><path d="M8 8l8 8M16 8l-8 8" stroke="#fff" stroke-width="2.200"/></svg>
    <svg class="wifi" width="24" height="18" viewBox="0 0 24 18"><g fill="none" stroke="#222" stroke-width="1.700"><path d="M1 6.500q11-11 22 0M4.500 10q7.500-7.500 15 0M8 13q4-4 8 0"/></g><circle cx="12" cy="15.500" r="2"/></svg>
    <svg class="vol" width="24" height="20" viewBox="0 0 24 20"><path d="M1 7h4l5-5v16l-5-5H1z" fill="none" stroke="#222" stroke-width="1.600"/><path d="M13 6q3 4 0 8" fill="none" stroke="#222" stroke-width="1.500"/><path d="M16.500 3.500q5 6.500 0 13M19.500 1q7 9 0 18" fill="none" stroke="#bbb" stroke-width="1.300"/></svg>
    <svg class="bat" width="24" height="20" viewBox="0 0 24 20"><path d="M12 5h6q3 0 3 3v7q0 3-3 3H2" fill="none" stroke="#222" stroke-width="1.800"/><path d="M21 9h3v4h-3z"/><path d="M7 0q5 5 3 10-2 4-7 3-4-4 1-8 3-2 3-5z"/><path d="M2 17l4-8" stroke="#222" stroke-width="1.500"/></svg>
    <div class="clock"><span>上午 11:25</span><span>2025/1/9</span></div>
  </div>
</footer>
</body>
</html>
```
FILE: styles.css
```css
* { box-sizing: border-box; }
body { margin: 0; width: 1919px; height: 1019px; overflow: hidden; background: #090909; color: #fff; font-family: "Noto Sans", "Noto Sans CJK TC", sans-serif; font-weight: 300; display: flex; flex-direction: column; }
svg { display: block; fill: currentColor; flex: none; }
h1, h2, h3, h4, p, dl, dd { margin: 0; font-weight: inherit; }
.sprite { display: none; }

/* browser chrome */
.browser { height: 122px; flex: none; background: #fff; border-bottom: 2px solid #dfdfdf; color: #474747; }
.toolbar { height: 69px; display: flex; align-items: center; padding-left: 20px; }
.nav-back, .nav-fwd, .nav-reload { width: 27px; height: 27px; }
.nav-fwd { margin-left: 26px; transform: scaleX(-1); color: #aaa; }
.nav-reload { margin-left: 28px; width: 27px; height: 27px; }
.omnibox { margin-left: 25px; width: 1532px; height: 51px; border-radius: 26px; background: #edf1fa; display: flex; align-items: center; padding-left: 3px; }
.site-info { width: 40px; height: 38px; border-radius: 19px; background: #fff; display: grid; place-items: center; color: #1f1f1f; margin-left: 2px; }
.url { font-size: 22.300px; line-height: 30px; margin: 0 0 3px 10px; width: 574px; letter-spacing: -.05px; white-space: nowrap; color: #3a3a3a; }
.url b { font-weight: inherit; color: #000; }
.ob-icon { width: 26px; height: 26px; margin-left: 22px; }
.url + .ob-icon { margin-left: 759px; }
.puzzle { width: 28px; height: 30px; margin-left: 27px; }
.sep { width: 2px; height: 24px; background: #d3e3fd; flex: none; }
.sep-ext { margin-left: 25px; }
.profile { width: 28px; height: 28px; margin-left: 22px; }
.dots { width: 6px; height: 24px; margin-left: 40px; }
.bookmarks { height: 44px; display: flex; align-items: center; padding: 0 20px 0 28px; font-size: 18px; white-space: nowrap; color: #3a3a3a; }
.bookmarks span { margin-bottom: 2px; }
.apps { width: 22px; height: 22px; }
.sep-apps { margin-left: 22px; }
.bm-gmail { width: 22px; height: 17px; margin-left: 23px; }
.t-gmail { width: 64px; margin-left: 10px; letter-spacing: .4px; }
.bm-yt { width: 24px; height: 18px; margin-left: 10px; }
.t-yt { margin-left: 8px; width: 82px; letter-spacing: .35px; }
.bm-m { width: 24px; height: 24px; margin-left: 16px; }
.t-learn { margin-left: 9px; letter-spacing: .32px; }
.sep-all { margin-left: auto; }
.folder { width: 24px; height: 19px; margin: 0 12px 0 25px; }

/* app header */
.app-header { height: 82px; flex: none; background: #282a2c; border-bottom: 1px solid #555; display: flex; align-items: center; padding-left: 24px; }
.logo { width: 32px; height: 62px; }
.brand { margin-left: 24px; width: 761px; padding-bottom: 1px; }
.brand h1 { font-size: 27px; line-height: 34px; }
.brand h2 { font-size: 17px; line-height: 22px; letter-spacing: -.45px; font-weight: 400; }
nav { display: flex; gap: 16px; height: 81px; font-size: 21.500px; line-height: 78px; }
nav a { border-bottom: 3px solid transparent; height: 81px; white-space: nowrap; }
nav .on { color: #5a9cf8; border-color: #5a9cf8; }
.h-full { width: 20px; height: 20px; margin-left: auto; }
.h-info { width: 28px; height: 28px; margin-left: 43px; }
.login { font-size: 24px; margin: 0 54px 2px 64px; }

/* sidebar */
.app { height: 744px; flex: none; display: flex; }
aside { width: 268px; margin-top: 27px; border-right: 1px solid #555; padding: 0 13px 25px 24px; display: flex; flex-direction: column; justify-content: space-between; }
aside h3 { font-size: 24.200px; line-height: 34px; height: 32px; color: #808080; }
.side-list { display: flex; flex-direction: column; gap: 16px; }
.item { height: 32px; display: flex; align-items: center; font-size: 24.200px; line-height: 34px; padding-left: 21px; border-left: 0; }
.item svg { width: 31px; height: 31px; margin-right: 15px; }
.item:last-child { margin-top: 1px; }
.active { background: #282a2c; color: #5a9cf8; border-left: 5px solid #5a9cf8; border-radius: 0 6px 6px 0; padding-left: 17px; }
.active svg { width: 28px; height: 28px; margin-right: 17px; }
.collapse { width: 17px; height: 15px; align-self: flex-end; margin: 0 12px 5px 0; }

/* main area */
main { width: 1603px; margin-left: 25px; padding-top: 22px; }
.title { height: 51px; border-bottom: 1px solid #555; display: flex; align-items: center; font-size: 24.200px; line-height: 36px; padding: 0 0 6px; }
.title svg { width: 30px; height: 30px; margin: 1px 16px 0 -1px; }
.content { display: flex; gap: 16px; margin-top: 25px; height: 623px; }
.cards { width: 499px; display: flex; flex-direction: column; gap: 24px; }
.card { height: 82px; background: #282a2c; border-radius: 6px; padding: 24px 24px 0; }
.tall { height: 411px; padding: 24px 0 0; overflow: hidden; }
.tall .card-head { padding: 0 24px; }
.card-head { display: flex; align-items: center; height: 34px; color: #888787; }
.card-head h4 { font-size: 24.200px; line-height: 34px; font-weight: 700; color: #fff; margin-right: 11px; }
.card-head svg { width: 25px; height: 25px; margin: -2px 10px 0 0; }
.toggle { width: 43px; height: 21px; border-radius: 11px; background: #888787; margin-left: auto; display: flex; align-items: center; padding: 0 3px; }
.toggle::before { content: ""; width: 15px; height: 15px; border-radius: 50%; background: #4a4b4f; }
.toggle-clip { height: 16px; overflow: hidden; margin: -5px 0 0 auto; display: flex; align-items: flex-end; }
.toggle.on { background: #5a9cf8; justify-content: flex-end; }
.toggle.on::before { background: #fff; }
.card p { font-size: 16px; line-height: 22px; color: #8e8d8d; padding-left: 24px; margin-top: -1px; letter-spacing: -.3px; }
.tabs { display: flex; gap: 5px; padding-left: 163px; margin-top: 12px; font-size: 16px; line-height: 32px; text-align: center; font-weight: 400; }
.tabs span { width: 76px; height: 32px; border-radius: 6px; background: #3a3b3d; color: #606163; }
.tabs .on { width: 92px; background: #606060; color: #b8b8b8; }
.chart { width: 499px; height: 288px; overflow: visible; }
.chart text { font: 16px "Liberation Sans", "Noto Sans CJK TC", sans-serif; fill: #888787; }
.ylab text, .xlab text { text-anchor: end; }
.chart .xlab text { font-size: 16.500px; }

/* map */
.map { position: relative; width: 1088px; height: 580px; border-radius: 6px; overflow: hidden; font-weight: 400; }
.tiles path { vector-effect: non-scaling-stroke; }
.tiles use { fill: none; }
.case-mid { stroke: #1f1f1f; stroke-width: 9px; }
.case-main { stroke: #212121; stroke-width: 15px; }
.fill-mid { stroke: #2e2e2e; stroke-width: 5.500px; stroke-linejoin: round; }
.fill-main { stroke: #343434; stroke-width: 11px; stroke-linejoin: round; }
.minor { fill: none; stroke: #303030; stroke-width: 1.300px; }
.contour { fill: none; stroke: #050505; stroke-width: 1.300px; }
.tunnel, .tunnel-edge, .tunnel-end { fill: none; stroke: #1c1c1c; stroke-width: 13px; }
.tunnel-edge { stroke: #3c3c3c; stroke-width: 16px; stroke-dasharray: 5 4; }
.tunnel-end { stroke: #303030; stroke-width: 7px; }
.tunnel.thin { stroke-width: 8px; }
.tunnel-edge.thin { stroke-width: 10px; }
.label text { font: 16.500px "Noto Sans CJK TC", sans-serif; fill: #777; stroke: #111; stroke-width: 3px; paint-order: stroke; }
.label .area { font-size: 16px; fill: #999; stroke-width: 1px; }
.popup { position: absolute; left: 105px; top: 309px; width: 350px; height: 300px; background: #282a2c; border: 1px solid #3e4042; border-radius: 5px; padding: 14px 14px 0 13px; font-size: 16px; }
.popup::before { content: ""; position: absolute; left: 162px; top: -13px; border: 12px solid transparent; border-top: 0; border-bottom: 12px solid #4a4b4f; }
.pop-head { display: flex; justify-content: space-between; align-items: flex-start; }
.pop-head span { width: 107px; height: 31px; line-height: 32px; border-radius: 5px; background: #4a4a4a; text-align: center; }
.pop-head svg { width: 12px; height: 12px; margin: 7px 10px 0 0; }
.popup dl { display: grid; grid-template-columns: 135px 187px; line-height: 27px; margin-top: 12px; }
.popup dt { font-weight: 700; }
.popup dd { text-align: justify; }
.popup dd:nth-of-type(4) { letter-spacing: .27px; white-space: nowrap; }
.mapbox { position: absolute; left: 14px; bottom: 11px; display: flex; gap: 5px; align-items: center; font: 700 21.500px/28px Lato, sans-serif; letter-spacing: 1.200px; color: #eee; text-shadow: 0 0 2px #000; }
.mapbox svg { width: 22px; height: 22px; }
.controls { position: absolute; right: 14px; top: 13px; width: 39px; color: #222; }
.ctl { width: 39px; min-height: 39px; background: #fff; border-radius: 5px; display: grid; place-items: center; }
.ctl svg { width: 24px; height: 24px; }
.group { margin: 14px 0 19px; }
.group span { width: 39px; height: 39px; display: grid; place-items: center; }
.group span + span { border-top: 1px solid #ddd; }
.group svg { width: 18px; height: 18px; }
.group .north { width: 12px; height: 24px; }
.controls b { display: block; width: 38px; height: 38px; margin: 0 0 5px 1px; border-radius: 50%; background: #fff; font-weight: 300; font-size: 17px; line-height: 37px; text-align: center; }
.attrib { position: absolute; right: 0; bottom: 0; height: 27px; width: 385px; background: rgba(255,255,255,.5); color: #353535; display: flex; justify-content: space-between; padding: 0 7px; font-size: 16.500px; line-height: 27px; white-space: nowrap; }
.attrib strong { font-weight: 500; color: #222; letter-spacing: -.15px; }
.chips { display: flex; gap: 8px; margin-top: 10px; height: 33px; font-size: 18px; line-height: 35px; color: #888; }
.chips span { background: #282a2c; border-radius: 6px; padding: 0 5.600px; }
.next { text-align: right; font-size: 16.500px; line-height: 20px; color: #333; margin: 4px 4px 0 0; letter-spacing: -.2px; }

/* taskbar */
.taskbar { height: 71px; flex: none; background: #eee; border-top: 1px solid #c8c8c8; color: #1c1c1c; display: flex; align-items: center; }
.weather { width: 44px; height: 50px; margin: -10px 0 0 27px; }
.weather text { font: 15px "Noto Sans", sans-serif; }
.wx-text { width: 385px; margin-left: 6px; display: flex; flex-direction: column; font-size: 17px; line-height: 24px; letter-spacing: -.4px; font-weight: 400; margin-top: -1px; }
.wx-text em { font-style: normal; color: #444; font-size: 18px; font-weight: 300; letter-spacing: 0; }
.win { width: 35px; height: 35px; }
.search { width: 328px; height: 48px; margin-left: 20px; border-radius: 24px; background: #fafafa; border: 1.500px solid #dadada; border-bottom: 2px solid #c8c8c8; display: flex; align-items: center; padding: 0 8px 0 15px; font-size: 20px; color: #444; }
.mag { width: 24px; height: 24px; margin-right: 15px; }
.study { width: 66px; height: 38px; margin-left: auto; }
.tasks { display: flex; gap: 8.900px; margin-left: 9.500px; height: 71px; align-items: center; }
.tasks > span { position: relative; width: 57px; height: 59px; display: grid; place-items: center; }
.tasks > span > svg:first-child { width: 36px; height: 36px; }
.tasks .run::after { content: ""; position: absolute; bottom: 1px; left: 23px; width: 10px; height: 5px; border-radius: 3px; background: #8a8a8a; }
.tasks .current { background: #f8f8f8; border: 1.500px solid #e0e0e0; border-radius: 5px; }
.tasks .current::after { width: 24px; left: 16px; bottom: 0; background: #0078d7; }
.mini { position: absolute; width: 24px; height: 24px; left: 30px; top: 3px; }
.line-t { font: 700 8px "Liberation Sans", sans-serif; fill: #00b900; }
.tray { margin-left: auto; margin-right: 28px; display: flex; align-items: center; }
.sync { margin-left: 27px; }
.xc { margin-left: 22px; }
.wifi { margin-left: 25px; }
.vol { margin-left: 12px; }
.bat { margin-left: 12px; }
.clock { width: 109px; display: flex; flex-direction: column; align-items: flex-end; font-size: 18.500px; line-height: 24px; letter-spacing: -.5px; font-weight: 400; margin-top: -1px; }
```
